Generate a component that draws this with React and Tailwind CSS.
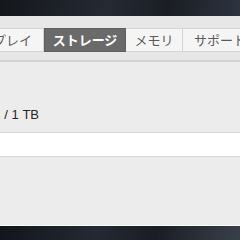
import React from 'react';

const jp = { fontFamily: '"Noto Sans CJK JP", "Noto Sans", sans-serif' };

function Tab({ label, active, last, w }) {
  if (active) {
    return (
      <div className={'h-full flex items-center justify-center bg-[#6a6a6a] border border-[#5e5e5e] text-white font-bold text-[13px] whitespace-nowrap ' + w}>
        {label}
      </div>
    );
  }
  return (
    <div
      className={
        'h-full flex items-center justify-center shrink-0 bg-[#f5f5f5] text-[#5a5a5a] text-[13px] whitespace-nowrap border-y border-[#d4d4d4] ' +
        (last ? '' : 'border-r ') +
        w
      }
    >
      {label}
    </div>
  );
}

export default function App() {
  return (
    <div className="w-[240px] h-[240px] overflow-hidden bg-[#1b1f25] flex flex-col" style={jp}>
      <div className="h-[16px] bg-[linear-gradient(100deg,#14171c_0%,#252a33_45%,#1a1e24_70%,#2e3440_100%)]" />

      {/* toolbar */}
      <div className="h-[44px] bg-[#e7e7e7] flex items-start pt-[12px]">
        <div className="flex h-[24px] items-stretch">
          <div className="w-[44px] flex justify-end h-full">
            <Tab label="一般" w="w-[48px]" />
            <Tab label="ディスプレイ" w="w-[100px]" />
          </div>
          <Tab label="ストレージ" active w="w-[82px]" />
          <Tab label="メモリ" w="w-[57px]" />
          <Tab label="サポート" w="w-[75px]" />
          <Tab label="サービス" last w="w-[75px]" />
        </div>
      </div>
      <div className="h-[2px] bg-[#d3d3d3]" />

      {/* content */}
      <div className="flex-1 bg-[#ececec] flex flex-col">
        <div className="h-[45px]" />
        <div className="w-[39px] flex justify-end whitespace-nowrap text-[13px] leading-[16px] text-[#262626] font-[Liberation_Sans]">
          498.21 GB 空き / 1 TB
        </div>
        <div className="h-[9px]" />
        <div className="h-[25px] bg-white border-y border-[#d6d6d6]" />
        <div className="flex-1" />
        <div className="h-px bg-[#fafafa]" />
      </div>

      <div className="h-[14px] bg-[linear-gradient(100deg,#12151a_0%,#242933_40%,#1a1d23_65%,#3a404b_100%)]" />
    </div>
  );
}
